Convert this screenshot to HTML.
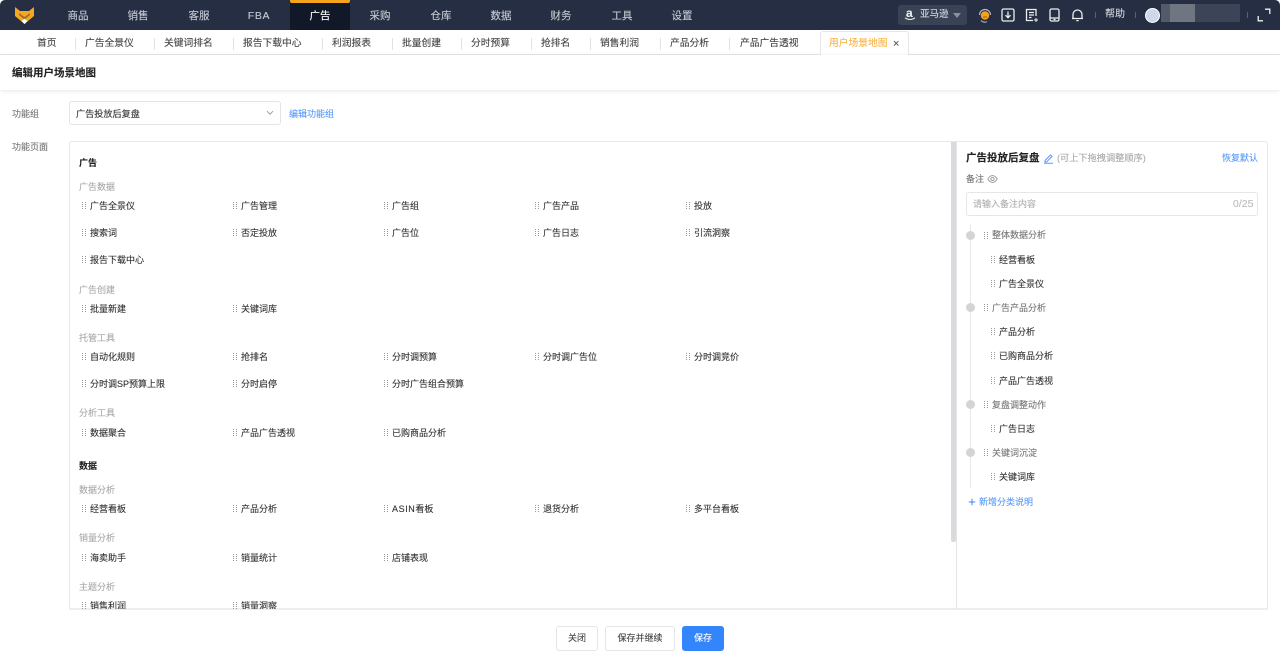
<!DOCTYPE html>
<html lang="zh">
<head>
<meta charset="utf-8">
<title>编辑用户场景地图</title>
<style>
html,body{margin:0;padding:0;width:1280px;height:656px;overflow:hidden;background:#fff;font-family:"Liberation Sans","Noto Sans CJK SC",sans-serif;color:#333}
*{box-sizing:border-box}
#w{position:absolute;left:0;top:0;width:1280px;height:656px;overflow:hidden;filter:blur(.3px);-webkit-text-stroke:.12px currentColor}
.a{position:absolute}
.t{position:absolute;white-space:nowrap;line-height:14px;font-size:9px}
#top{position:absolute;left:0;top:0;width:1280px;height:30px;background:#252e42;border-radius:5px 5px 0 0}
.n{position:absolute;top:9px;width:60px;text-align:center;font-size:10.5px;line-height:14px;color:#c6cad2;white-space:nowrap}
.tab{position:absolute;top:37px;font-size:9.75px;line-height:14px;color:#444;white-space:nowrap}
.sep{position:absolute;top:38px;width:1px;height:12px;background:#e2e2e2}
.g{position:absolute;width:4px;height:8px;background:repeating-linear-gradient(90deg,#999 0 1px,transparent 1px 3px);-webkit-mask-image:repeating-linear-gradient(180deg,#000 0 1px,transparent 1px 2px);mask-image:repeating-linear-gradient(180deg,#000 0 1px,transparent 1px 2px)}
.i{color:#333}
.l{color:#aaa}
.h{font-weight:bold;color:#222}
.r1{color:#777}
.dot{position:absolute;left:966px;width:9px;height:9px;border-radius:50%;background:#d4d4d4}
.btn{position:absolute;top:626px;height:25px;border:1px solid #e5e5e5;border-radius:3px;background:#fff;text-align:center;font-size:9px;line-height:23px;color:#444}
</style>
</head>
<body>
<div id="w">
<div id="top"></div>
<svg class="a" style="left:14px;top:6px" width="21" height="19" viewBox="0 0 21 19"><path d="M1 1 L6 5 L15 5 L20 1 L20 10 L10.5 18 L1 10Z" fill="#f5a623"/><path d="M5 7 L10.5 11 L16 7 L16 9 L10.500 13.500 L5 9Z" fill="#252e42" opacity=".45"/><path d="M7.5 15 L10.5 12.800 L13.500 15 L10.500 18Z" fill="#fff"/></svg>
<div class="a" style="left:290px;top:0;width:60px;height:30px;background:#111827"></div>
<div class="a" style="left:290px;top:0;width:60px;height:2.500px;background:#f5a31a;border-radius:0 0 2px 2px"></div>
<div class="n" style="left:48px">商品</div>
<div class="n" style="left:108px">销售</div>
<div class="n" style="left:169px">客服</div>
<div class="n" style="left:229px;letter-spacing:.7px">FBA</div>
<div class="n" style="left:290px;color:#fff">广告</div>
<div class="n" style="left:350px">采购</div>
<div class="n" style="left:411px">仓库</div>
<div class="n" style="left:471px">数据</div>
<div class="n" style="left:531px">财务</div>
<div class="n" style="left:592px">工具</div>
<div class="n" style="left:652px">设置</div>

<div class="a" style="left:898px;top:5px;width:69px;height:20px;border-radius:3px;background:#3a4356"></div>
<div class="t" style="left:906px;top:6px;font-size:12px;font-weight:bold;color:#eee">a</div>
<svg class="a" style="left:904px;top:17px" width="12" height="4" viewBox="0 0 12 4" fill="none" stroke="#eee" stroke-width="1"><path d="M1 .8C4 3 8 3 11 .8"/></svg>
<div class="t" style="left:920px;top:8px;color:#d5d8de;font-size:9.500px">亚马逊</div>
<div class="a" style="left:953px;top:13px;width:0;height:0;border-left:4px solid transparent;border-right:4px solid transparent;border-top:5px solid #8a90a0"></div>
<svg class="a" style="left:978px;top:8px" width="14" height="15" viewBox="0 0 14 15"><path d="M1.500 7a5.500 5.500 0 0 1 11 0" fill="none" stroke="#b5b8bf" stroke-width="1.200"/><path d="M3 12.500a5.500 5.500 0 0 0 6 1.200" fill="none" stroke="#b5b8bf" stroke-width="1"/><circle cx="7" cy="7.500" r="4.200" fill="#f5a31a"/><path d="M5 9h4" stroke="#7a5510" stroke-width=".8"/></svg>
<svg class="a" style="left:1001px;top:8px" width="14" height="14" viewBox="0 0 14 14" fill="none" stroke="#eceef1" stroke-width="1.300"><rect x="1" y="1" width="12" height="12" rx="1.500"/><path d="M7 3.500v6M4.500 7.200L7 9.700l2.500-2.500"/></svg>
<svg class="a" style="left:1025px;top:8px" width="14" height="15" viewBox="0 0 14 15" fill="none" stroke="#eceef1" stroke-width="1.300"><path d="M11 8V1.500H1.500v11H8"/><path d="M4 4.500h5M4 7h5M4 9.500h2.500"/><path d="M11 10v4M9 12h4" stroke-width="1"/></svg>
<svg class="a" style="left:1049px;top:8px" width="11" height="14" viewBox="0 0 11 14" fill="none" stroke="#eceef1" stroke-width="1.300"><rect x="1" y="1" width="9" height="12" rx="1.500"/><path d="M1 10h9M4.500 11.500h2"/></svg>
<svg class="a" style="left:1071px;top:8px" width="13" height="14" viewBox="0 0 13 14" fill="none" stroke="#eceef1" stroke-width="1.300"><path d="M2 10.500V6.500a4.500 4.500 0 0 1 9 0v4zM1 10.500h11M5.300 12.600h2.400"/></svg>
<div class="a" style="left:1095px;top:12px;width:1px;height:6px;background:#566"></div>
<div class="t" style="left:1105px;top:8px;color:#d5d8de;font-size:10px">帮助</div>
<div class="a" style="left:1135px;top:12px;width:1px;height:6px;background:#566"></div>
<div class="a" style="left:1145px;top:8px;width:15px;height:15px;border-radius:50%;background:#cfd8ea;border:1.500px solid #fff"></div>
<div class="a" style="left:1161px;top:4px;width:79px;height:18px;background:#3c4558"></div>
<div class="a" style="left:1161px;top:4px;width:9px;height:18px;background:#535b6b"></div>
<div class="a" style="left:1170px;top:4px;width:25px;height:18px;background:#6f7682"></div>
<div class="a" style="left:1247px;top:12px;width:1px;height:6px;background:#566"></div>
<svg class="a" style="left:1257px;top:8px" width="14" height="14" viewBox="0 0 14 14" fill="none" stroke="#eef0f3" stroke-width="1.300"><path d="M8 1.200h4.800V6M1.200 8v4.800H6"/></svg>

<!-- tab bar -->
<div class="a" style="left:0;top:30px;width:1280px;height:25px;background:#fff;border-bottom:1px solid #e6e6e6"></div>
<div class="tab" style="left:37px">首页</div><div class="sep" style="left:75px"></div>
<div class="tab" style="left:85px">广告全景仪</div><div class="sep" style="left:154px"></div>
<div class="tab" style="left:164px">关键词排名</div><div class="sep" style="left:233px"></div>
<div class="tab" style="left:243px">报告下载中心</div><div class="sep" style="left:322px"></div>
<div class="tab" style="left:332px">利润报表</div><div class="sep" style="left:392px"></div>
<div class="tab" style="left:402px">批量创建</div><div class="sep" style="left:461px"></div>
<div class="tab" style="left:471px">分时预算</div><div class="sep" style="left:531px"></div>
<div class="tab" style="left:541px">抢排名</div><div class="sep" style="left:590px"></div>
<div class="tab" style="left:600px">销售利润</div><div class="sep" style="left:660px"></div>
<div class="tab" style="left:670px">产品分析</div><div class="sep" style="left:729px"></div>
<div class="tab" style="left:740px">产品广告透视</div>
<div class="a" style="left:820px;top:31px;width:89px;height:25px;background:#fff;border:1px solid #e6e6e6;border-bottom:none;border-radius:3px 3px 0 0"></div>
<div class="tab" style="left:829px;color:#f9b347">用户场景地图</div>
<div class="t" style="left:893px;top:37px;font-size:11px;color:#555">×</div>

<!-- title -->
<div class="a" style="left:0;top:55px;width:1280px;height:35px;background:#fff;box-shadow:0 1px 4px rgba(0,0,0,.1)"></div>
<div class="t" style="left:12px;top:66px;font-size:10.500px;font-weight:bold;color:#222">编辑用户场景地图</div>

<!-- form -->
<div class="t" style="left:12px;top:107px;color:#777">功能组</div>
<div class="a" style="left:69px;top:101px;width:212px;height:24px;border:1px solid #e4e4e4;border-radius:3px"></div>
<div class="t" style="left:76px;top:107px;color:#333;font-size:9.150px">广告投放后复盘</div>
<svg class="a" style="left:266px;top:110px" width="8" height="6" viewBox="0 0 8 6" fill="none" stroke="#999" stroke-width="1"><path d="M1 1.200l3 3 3-3"/></svg>
<div class="t" style="left:289px;top:107px;color:#5a9bfa">编辑功能组</div>
<div class="t" style="left:12px;top:140px;color:#777">功能页面</div>

<!-- panel -->
<div class="a" style="left:69px;top:141px;width:1199px;height:469px;border:1px solid #e8e8e8;border-bottom:2px solid #eee;border-radius:3px 3px 0 0"></div>
<div class="a" style="left:70px;top:142px;width:881px;height:467px;overflow:hidden">
<div style="position:absolute;left:-70px;top:-142px;width:951px;height:609px">
<div class="t h" style="left:79px;top:156px">广告</div>
<div class="t l" style="left:79px;top:180px">广告数据</div>
<div class="g" style="left:82px;top:202px"></div><div class="t i" style="left:90px;top:199px">广告全景仪</div>
<div class="g" style="left:233px;top:202px"></div><div class="t i" style="left:241px;top:199px">广告管理</div>
<div class="g" style="left:384px;top:202px"></div><div class="t i" style="left:392px;top:199px">广告组</div>
<div class="g" style="left:535px;top:202px"></div><div class="t i" style="left:543px;top:199px">广告产品</div>
<div class="g" style="left:686px;top:202px"></div><div class="t i" style="left:694px;top:199px">投放</div>
<div class="g" style="left:82px;top:229px"></div><div class="t i" style="left:90px;top:226px">搜索词</div>
<div class="g" style="left:233px;top:229px"></div><div class="t i" style="left:241px;top:226px">否定投放</div>
<div class="g" style="left:384px;top:229px"></div><div class="t i" style="left:392px;top:226px">广告位</div>
<div class="g" style="left:535px;top:229px"></div><div class="t i" style="left:543px;top:226px">广告日志</div>
<div class="g" style="left:686px;top:229px"></div><div class="t i" style="left:694px;top:226px">引流洞察</div>
<div class="g" style="left:82px;top:256px"></div><div class="t i" style="left:90px;top:253px">报告下载中心</div>
<div class="t l" style="left:79px;top:283px">广告创建</div>
<div class="g" style="left:82px;top:305px"></div><div class="t i" style="left:90px;top:302px">批量新建</div>
<div class="g" style="left:233px;top:305px"></div><div class="t i" style="left:241px;top:302px">关键词库</div>
<div class="t l" style="left:79px;top:331px">托管工具</div>
<div class="g" style="left:82px;top:353px"></div><div class="t i" style="left:90px;top:350px">自动化规则</div>
<div class="g" style="left:233px;top:353px"></div><div class="t i" style="left:241px;top:350px">抢排名</div>
<div class="g" style="left:384px;top:353px"></div><div class="t i" style="left:392px;top:350px">分时调预算</div>
<div class="g" style="left:535px;top:353px"></div><div class="t i" style="left:543px;top:350px">分时调广告位</div>
<div class="g" style="left:686px;top:353px"></div><div class="t i" style="left:694px;top:350px">分时调竞价</div>
<div class="g" style="left:82px;top:380px"></div><div class="t i" style="left:90px;top:377px">分时调SP预算上限</div>
<div class="g" style="left:233px;top:380px"></div><div class="t i" style="left:241px;top:377px">分时启停</div>
<div class="g" style="left:384px;top:380px"></div><div class="t i" style="left:392px;top:377px">分时广告组合预算</div>
<div class="t l" style="left:79px;top:406px">分析工具</div>
<div class="g" style="left:82px;top:429px"></div><div class="t i" style="left:90px;top:426px">数据聚合</div>
<div class="g" style="left:233px;top:429px"></div><div class="t i" style="left:241px;top:426px">产品广告透视</div>
<div class="g" style="left:384px;top:429px"></div><div class="t i" style="left:392px;top:426px">已购商品分析</div>
<div class="t h" style="left:79px;top:459px">数据</div>
<div class="t l" style="left:79px;top:483px">数据分析</div>
<div class="g" style="left:82px;top:505px"></div><div class="t i" style="left:90px;top:502px">经营看板</div>
<div class="g" style="left:233px;top:505px"></div><div class="t i" style="left:241px;top:502px">产品分析</div>
<div class="g" style="left:384px;top:505px"></div><div class="t i" style="left:392px;top:502px"><span style="letter-spacing:.6px">ASIN</span>看板</div>
<div class="g" style="left:535px;top:505px"></div><div class="t i" style="left:543px;top:502px">退货分析</div>
<div class="g" style="left:686px;top:505px"></div><div class="t i" style="left:694px;top:502px">多平台看板</div>
<div class="t l" style="left:79px;top:531px">销量分析</div>
<div class="g" style="left:82px;top:554px"></div><div class="t i" style="left:90px;top:551px">海卖助手</div>
<div class="g" style="left:233px;top:554px"></div><div class="t i" style="left:241px;top:551px">销量统计</div>
<div class="g" style="left:384px;top:554px"></div><div class="t i" style="left:392px;top:551px">店铺表现</div>
<div class="t l" style="left:79px;top:580px">主题分析</div>
<div class="g" style="left:82px;top:602px"></div><div class="t i" style="left:90px;top:599px">销售利润</div>
<div class="g" style="left:233px;top:602px"></div><div class="t i" style="left:241px;top:599px">销量洞察</div>
</div>
</div>
<!-- scrollbar + divider -->
<div class="a" style="left:951px;top:142px;width:5px;height:400px;background:#d9dade;border-radius:0 0 2px 2px"></div>
<div class="a" style="left:956px;top:142px;width:1px;height:467px;background:#e4e4e4"></div>

<!-- right -->
<div class="t" style="left:966px;top:151px;font-size:10.500px;font-weight:bold;color:#222">广告投放后复盘</div>
<svg class="a" style="left:1043px;top:153px" width="11" height="11" viewBox="0 0 11 11" fill="none" stroke="#5a9bfa" stroke-width="1"><path d="M2 7.500L7.500 2l1.500 1.500L3.500 9H2zM1 10.300h9"/></svg>
<div class="t" style="left:1057px;top:151px;color:#aaa;font-size:9.200px">(可上下拖拽调整顺序)</div>
<div class="t" style="left:1222px;top:151px;color:#5a9bfa">恢复默认</div>
<div class="t" style="left:966px;top:172px;color:#777">备注</div>
<svg class="a" style="left:987px;top:174px" width="11" height="10" viewBox="0 0 11 10" fill="none" stroke="#999" stroke-width=".9"><path d="M.8 5C2.300 2.600 3.800 1.600 5.500 1.600S8.700 2.600 10.200 5C8.700 7.400 7.200 8.400 5.500 8.400S2.300 7.400.8 5z"/><circle cx="5.500" cy="5" r="1.600"/></svg>
<div class="a" style="left:966px;top:192px;width:292px;height:24px;border:1px solid #e6e6e6;border-radius:3px"></div>
<div class="t" style="left:973px;top:197px;color:#b0b0b0">请输入备注内容</div>
<div class="t" style="left:1233px;top:197px;color:#bbb;font-size:10.500px">0/25</div>

<div class="a" style="left:970px;top:224px;width:1px;height:264px;background:#e8e8e8"></div>
<div class="dot" style="top:231px"></div>
<div class="g" style="left:984px;top:232px"></div><div class="t r1" style="left:992px;top:228px">整体数据分析</div>
<div class="g" style="left:991px;top:256px"></div><div class="t i" style="left:999px;top:253px">经营看板</div>
<div class="g" style="left:991px;top:280px"></div><div class="t i" style="left:999px;top:277px">广告全景仪</div>
<div class="dot" style="top:303px"></div>
<div class="g" style="left:984px;top:304px"></div><div class="t r1" style="left:992px;top:301px">广告产品分析</div>
<div class="g" style="left:991px;top:328px"></div><div class="t i" style="left:999px;top:325px">产品分析</div>
<div class="g" style="left:991px;top:352px"></div><div class="t i" style="left:999px;top:349px">已购商品分析</div>
<div class="g" style="left:991px;top:377px"></div><div class="t i" style="left:999px;top:374px">产品广告透视</div>
<div class="dot" style="top:400px"></div>
<div class="g" style="left:984px;top:401px"></div><div class="t r1" style="left:992px;top:398px">复盘调整动作</div>
<div class="g" style="left:991px;top:425px"></div><div class="t i" style="left:999px;top:422px">广告日志</div>
<div class="dot" style="top:448px"></div>
<div class="g" style="left:984px;top:449px"></div><div class="t r1" style="left:992px;top:446px">关键词沉淀</div>
<div class="g" style="left:991px;top:473px"></div><div class="t i" style="left:999px;top:470px">关键词库</div>
<svg class="a" style="left:968px;top:498px" width="8" height="8" viewBox="0 0 8 8" stroke="#3b86f7" stroke-width="1"><path d="M4 .8v6.400M.8 4h6.400"/></svg>
<div class="t" style="left:979px;top:495px;color:#5a9bfa">新增分类说明</div>

<!-- buttons -->
<div class="btn" style="left:556px;width:42px">关闭</div>
<div class="btn" style="left:605px;width:70px">保存并继续</div>
<div class="btn" style="left:682px;width:42px;background:#3385fb;border-color:#3385fb;color:#fff">保存</div>
</div>
</body>
</html>
